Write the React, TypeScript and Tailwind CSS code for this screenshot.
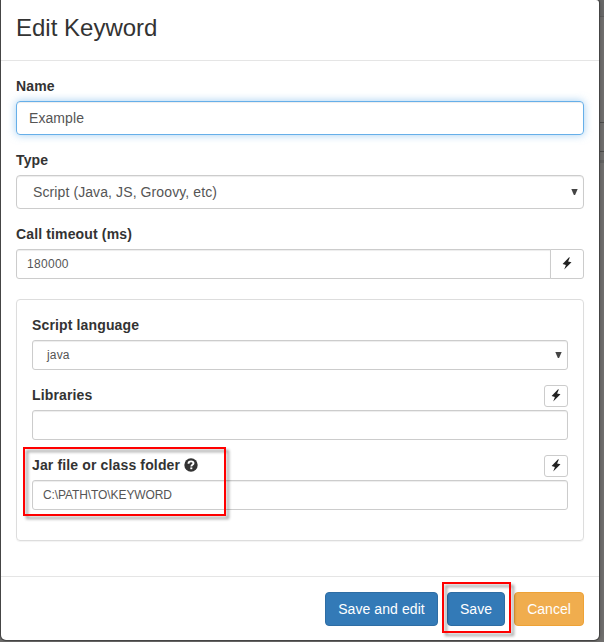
import React from 'react';

const Flash = () => (
  <svg width="10" height="13" viewBox="0 0 10 13" fill="#222" className="block">
    <path d="M7.1 0.3 0.6 6.9 3.9 7.9 2.2 12.5 9.5 5.3 6.1 4.5 7.8 0.6Z" />
  </svg>
);

const QuestionSign = () => (
  <svg width="14" height="14" viewBox="0 0 14 14" className="block">
    <circle cx="7" cy="7" r="6.7" fill="#333" />
    <path
      d="M4.5 5.7C4.5 4 5.6 3.4 7.1 3.4S9.5 4.1 9.5 5.2C9.5 6.8 7.3 6.8 7.3 8.5"
      fill="none"
      stroke="#fff"
      strokeWidth="1.9"
    />
    <rect x="6.3" y="9.4" width="2" height="1.8" fill="#fff" />
  </svg>
);

const Caret = () => (
  <svg width="7" height="6" viewBox="0 0 7 6" fill="#444" className="block">
    <path d="M0.3 0H6.7L4.1 6H2.9Z" />
  </svg>
);

const Label = ({ children }: { children: React.ReactNode }) => (
  <div className="mb-[5px] flex h-5 items-center text-sm leading-5 font-bold tracking-[0.14px] text-[#333]">
    {children}
  </div>
);

const FlashButton = () => (
  <button className="flex h-[22px] w-6 items-center justify-center rounded-[3px] border border-[#ccc] bg-white pb-px">
    <Flash />
  </button>
);

const field =
  'flex items-center border border-[#ccc] bg-white text-[#555] shadow-[inset_0_1px_1px_rgba(0,0,0,0.075)]';

export default function App() {
  return (
    <div className="relative flex h-[642px] w-[604px] overflow-hidden bg-[#706f6e] font-['Liberation_Sans',Arial,sans-serif]">
      {/* dimmed page behind the dialog */}
      <div className="absolute top-0 right-0 h-full w-[5px]">
        <div className="h-4 bg-[#696969]" />
        <div className="h-px bg-[#5c5c5c]" />
        <div className="h-[105px]" />
        <div className="h-px bg-[#4c4c4c]" />
        <div className="h-7" />
        <div className="h-px bg-[#4c4c4c]" />
        <div className="h-2" />
        <div className="h-[3px] bg-[#626262]" />
      </div>

      <div className="relative ml-px h-[640px] w-[598px] rounded-b-[5px] rounded-tr-[3px] bg-white shadow-[0_0_0_1px_#454545,0_0_4px_rgba(0,0,0,0.4)]">
        <header className="h-[61px] border-b border-[#e5e5e5] px-[15px] pt-[11px]">
          <h4 className="text-2xl leading-[34px] text-[#333]">Edit Keyword</h4>
        </header>

        <main className="p-[15px]">
          <div className="mb-[15px]">
            <Label>Name</Label>
            <div className="flex h-[34px] items-center rounded border border-[#66afe9] px-3 text-sm tracking-[0.08px] text-[#555] shadow-[inset_0_1px_1px_rgba(0,0,0,0.075),0_0_8px_rgba(102,175,233,0.6)]">
              Example
            </div>
          </div>

          <div className="mb-[15px]">
            <Label>Type</Label>
            <div className={`${field} h-[34px] justify-between rounded pr-[5px] pl-4 text-sm tracking-[0.1px]`}>
              Script (Java, JS, Groovy, etc)
              <Caret />
            </div>
          </div>

          <div className="mb-5">
            <Label>Call timeout (ms)</Label>
            <div className="flex">
              <div className={`${field} h-[30px] flex-1 rounded-l-[3px] px-[10px] text-xs tracking-[0.3px]`}>
                180000
              </div>
              <button className="-ml-px flex h-[30px] w-[34px] items-center justify-center rounded-r-[3px] border border-[#ccc] bg-white pb-[2px]">
                <Flash />
              </button>
            </div>
          </div>

          <section className="mb-5 h-[242px] rounded border border-[#ddd] p-[15px] shadow-[0_1px_1px_rgba(0,0,0,0.05)]">
            <div className="mb-[15px]">
              <Label>Script language</Label>
              <div className={`${field} h-[30px] justify-between rounded-[3px] pr-[5px] pl-[14px] text-xs tracking-[0.15px]`}>
                java
                <Caret />
              </div>
            </div>

            <div className="mb-[15px]">
              <div className="flex justify-between">
                <Label>Libraries</Label>
                <FlashButton />
              </div>
              <div className={`${field} h-[30px] rounded-[3px]`} />
            </div>

            <div>
              <div className="flex justify-between">
                <Label>
                  Jar file or class folder
                  <span className="mb-px ml-1">
                    <QuestionSign />
                  </span>
                </Label>
                <FlashButton />
              </div>
              <div className={`${field} h-[30px] rounded-[3px] px-[10px] text-xs tracking-[-0.1px]`}>
                C:\PATH\TO\KEYWORD
              </div>
            </div>
          </section>
        </main>

        <footer className="flex justify-end border-t border-[#e5e5e5] px-[15px] pt-[15px] text-sm text-white">
          <button className="h-[34px] w-[113px] rounded border border-[#2e6da4] bg-[#337ab7] tracking-[0.08px]">
            Save and edit
          </button>
          <button className="ml-[9px] h-[34px] w-[58px] rounded border border-[#2e6da4] bg-[#337ab7]">
            Save
          </button>
          <button className="ml-[9px] h-[34px] w-[70px] rounded border border-[#eea236] bg-[#f0ad4e]">
            Cancel
          </button>
        </footer>
      </div>

      {/* callout frames */}
      <div className="absolute top-[447px] left-[23px] h-[69px] w-[203px] border-2 border-[#f00] drop-shadow-[3px_3px_1.5px_rgba(0,0,0,0.4)]" />
      <div className="absolute top-[582px] left-[442px] h-[51px] w-[69px] border-2 border-[#f00] drop-shadow-[3px_3px_1.5px_rgba(0,0,0,0.4)]" />
    </div>
  );
}
